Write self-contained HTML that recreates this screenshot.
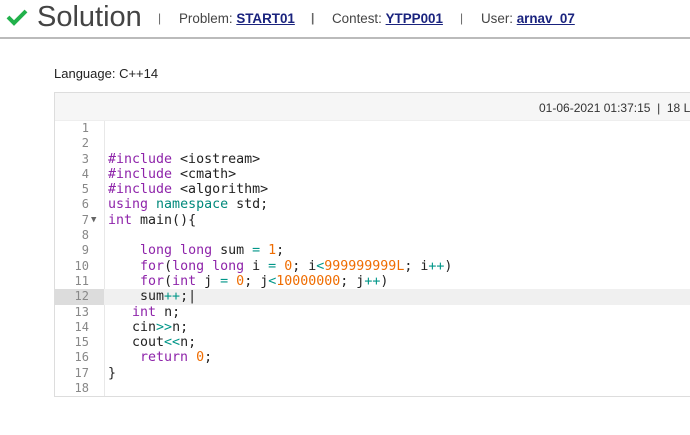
<!DOCTYPE html>
<html><head><style>
body{margin:0;width:690px;height:435px;background:#fff;position:relative;overflow:hidden;font-family:"Liberation Sans",sans-serif;}
.hdr{position:absolute;left:0;top:0;width:690px;height:37px;border-bottom:2px solid #bbb;}
.t{position:absolute;left:37px;top:1px;font-size:29px;color:#444;}
.m{position:absolute;top:11px;font-size:13.4px;color:#444;}
.m a{color:#1a237e;font-weight:bold;text-decoration:underline;}
.sep{position:absolute;top:11px;font-size:12px;color:#666;}
.lang{position:absolute;left:54px;top:66px;font-size:13px;color:#222;}
.box{position:absolute;left:54px;top:92px;width:650px;height:303px;border:1px solid #ddd;}
.bh{height:27px;background:#f6f6f6;border-bottom:1px solid #eee;font-size:12px;color:#333;}
.bh span{position:absolute;left:484px;top:8px;white-space:pre;}
.gut{position:absolute;left:0;top:28px;width:49px;height:275px;background:#fff;border-right:1px solid #e8e8e8;}
.code{position:absolute;left:0;top:28px;width:650px;font-family:"DejaVu Sans Mono",monospace;font-size:13.3px;}
.l{height:15.3px;line-height:15.3px;position:relative;white-space:pre;color:#222;}
.n{position:absolute;left:0;width:34px;text-align:right;color:#888;font-size:12px;}
.ar{position:absolute;left:36px;color:#666;font-size:9px;}
.c{position:absolute;left:53px;}
.act{background:#f0f0f0;}
.k{color:#8e24aa}.ns{color:#00897b}.o{color:#009688}.num{color:#ef6c00}
</style></head><body>
<div class="hdr">
<svg style="position:absolute;left:6px;top:8px" width="22" height="18" viewBox="0 0 22 18"><path d="M2 9 L8 15 L20 3" stroke="#21b14b" stroke-width="4" fill="none"/></svg>
<div class="t">Solution</div>
<span class="sep" style="left:158px">|</span>
<span class="m" style="left:179px">Problem: <a>START01</a></span>
<span class="sep" style="left:311px;font-weight:bold">|</span>
<span class="m" style="left:332px">Contest: <a>YTPP001</a></span>
<span class="sep" style="left:460px">|</span>
<span class="m" style="left:481px">User: <a>arnav_07</a></span>
</div>
<div class="lang">Language: C++14</div>
<div class="box">
<div class="bh"><span>01-06-2021 01:37:15  |  18 Lines</span></div>
<div class="gut"></div>
<div class="code">
<div class="l"><span class="n">1</span></div>
<div class="l"><span class="n">2</span></div>
<div class="l"><span class="n">3</span><span class="c"><span class="k">#include</span> &lt;iostream&gt;</span></div>
<div class="l"><span class="n">4</span><span class="c"><span class="k">#include</span> &lt;cmath&gt;</span></div>
<div class="l"><span class="n">5</span><span class="c"><span class="k">#include</span> &lt;algorithm&gt;</span></div>
<div class="l"><span class="n">6</span><span class="c"><span class="k">using</span> <span class="ns">namespace</span> std;</span></div>
<div class="l"><span class="n">7</span><span class="ar">▼</span><span class="c"><span class="k">int</span> main(){</span></div>
<div class="l"><span class="n">8</span></div>
<div class="l"><span class="n">9</span><span class="c">    <span class="k">long long</span> sum <span class="o">=</span> <span class="num">1</span>;</span></div>
<div class="l"><span class="n">10</span><span class="c">    <span class="k">for</span>(<span class="k">long long</span> i <span class="o">=</span> <span class="num">0</span>; i<span class="o">&lt;</span><span class="num">999999999L</span>; i<span class="o">++</span>)</span></div>
<div class="l"><span class="n">11</span><span class="c">    <span class="k">for</span>(<span class="k">int</span> j <span class="o">=</span> <span class="num">0</span>; j<span class="o">&lt;</span><span class="num">10000000</span>; j<span class="o">++</span>)</span></div>
<div class="l act"><span style="position:absolute;left:0;top:0;width:49px;height:15.3px;background:#dcdcdc"></span><span class="n">12</span><span class="c">    sum<span class="o">++</span>;|</span></div>
<div class="l"><span class="n">13</span><span class="c">   <span class="k">int</span> n;</span></div>
<div class="l"><span class="n">14</span><span class="c">   cin<span class="o">&gt;&gt;</span>n;</span></div>
<div class="l"><span class="n">15</span><span class="c">   cout<span class="o">&lt;&lt;</span>n;</span></div>
<div class="l"><span class="n">16</span><span class="c">    <span class="k">return</span> <span class="num">0</span>;</span></div>
<div class="l"><span class="n">17</span><span class="c">}</span></div>
<div class="l"><span class="n">18</span></div>
</div>
</div>
</body></html>
